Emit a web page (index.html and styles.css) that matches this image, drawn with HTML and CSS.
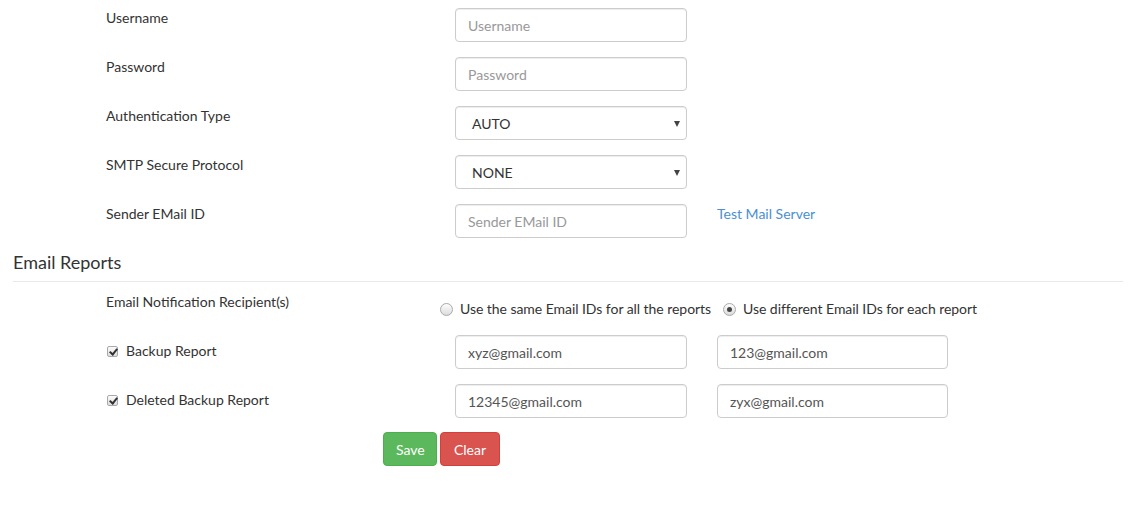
FILE: index.html
```html
<!DOCTYPE html>
<html>
<head>
<meta charset="utf-8">
<link rel="stylesheet" href="styles.css">
</head>
<body>
<div class="page">
  <div class="rows">
    <div class="row">
      <label class="lbl">Username</label>
      <input class="field" type="text" placeholder="Username">
    </div>
    <div class="row">
      <label class="lbl">Password</label>
      <input class="field" type="text" placeholder="Password">
    </div>
    <div class="row">
      <label class="lbl">Authentication Type</label>
      <div class="select"><span>AUTO</span><i class="arrow"></i></div>
    </div>
    <div class="row">
      <label class="lbl">SMTP Secure Protocol</label>
      <div class="select"><span>NONE</span><i class="arrow"></i></div>
    </div>
    <div class="row">
      <label class="lbl">Sender EMail ID</label>
      <input class="field" type="text" placeholder="Sender EMail ID">
      <a class="link" href="#">Test Mail Server</a>
    </div>
  </div>

  <h3 class="heading">Email Reports</h3>

  <div class="reports">
    <div class="row notif">
      <label class="lbl">Email Notification Recipient(s)</label>
      <div class="radios">
        <span class="radio-opt"><span class="radio"></span>Use the same Email IDs for all the reports</span>
        <span class="radio-opt"><span class="radio on"></span>Use different Email IDs for each report</span>
      </div>
    </div>
    <div class="row">
      <label class="lbl check-lbl"><span class="check"></span>Backup Report</label>
      <input class="field" type="text" value="xyz@gmail.com">
      <input class="field second" type="text" value="123@gmail.com">
    </div>
    <div class="row">
      <label class="lbl check-lbl"><span class="check"></span>Deleted Backup Report</label>
      <input class="field" type="text" value="12345@gmail.com">
      <input class="field second" type="text" value="zyx@gmail.com">
    </div>
    <div class="buttons">
      <button class="btn save">Save</button>
      <button class="btn clear">Clear</button>
    </div>
  </div>
</div>
</body>
</html>
```

FILE: styles.css
```css
* { box-sizing: border-box; }
html, body { margin: 0; padding: 0; background: #fff; }
body {
  font-family: Lato, "Open Sans", "Liberation Sans", sans-serif;
  font-size: 14px;
  line-height: 20px;
  color: #333;
}
.page { padding: 8px 23px 0 13px; }
.rows { display: flex; flex-direction: column; gap: 15px; }
.row { display: flex; align-items: flex-start; height: 34px; }
.lbl {
  width: 442px;
  padding-left: 93px;
  flex: none;
  font-weight: normal;
}
.field {
  width: 232px;
  height: 34px;
  flex: none;
  border: 1px solid #ccc;
  border-radius: 4px;
  padding: 6px 12px;
  font-family: inherit;
  font-size: 14px;
  color: #555;
  outline: none;
  box-shadow: inset 0 1px 1px rgba(0,0,0,0.075);
}
.field::placeholder { color: #999; }
.second { margin-left: 30px; width: 231px; }
.select {
  width: 232px;
  height: 34px;
  flex: none;
  border: 1px solid #ccc;
  border-radius: 4px;
  padding: 7px 0 0 16px;
  color: #333;
  display: flex;
  justify-content: space-between;
  box-shadow: inset 0 1px 1px rgba(0,0,0,0.075);
}
.arrow {
  width: 0; height: 0;
  border-left: 3px solid transparent;
  border-right: 3px solid transparent;
  border-top: 6px solid #444;
  margin: 7px 6px 0 0;
}
.link {
  margin-left: 30px;
  color: #4a90d2;
  text-decoration: none;
}
.heading {
  margin: 14px 0 0 0;
  padding: 0 0 9px 0;
  font-size: 18px;
  font-weight: normal;
  line-height: 20px;
  border-bottom: 1px solid #e9e9e9;
}
.reports { display: flex; flex-direction: column; }
.notif { height: auto; margin-top: 10px; }
.radios { display: flex; gap: 12px; margin-top: 7px; margin-left: -15px; letter-spacing: -0.05px; }
.radio-opt { display: flex; align-items: center; }
.radio {
  width: 13px; height: 13px;
  border-radius: 50%;
  border: 1px solid #a9a9a9;
  background: linear-gradient(#fdfdfd, #dcdcdc);
  margin-right: 7px;
  display: inline-flex;
  align-items: center;
  justify-content: center;
}
.radio.on::after {
  content: "";
  width: 5px; height: 5px;
  border-radius: 50%;
  background: #444;
}
.reports .row + .row { margin-top: 15px; }
.notif + .row { margin-top: 16px !important; }
.check-lbl { display: flex; align-items: center; padding-top: 6px; padding-left: 94px; }
.check {
  width: 11px; height: 11px;
  border: 1px solid #a9a9a9;
  border-radius: 2px;
  background: linear-gradient(#fbfbfb, #dedede);
  margin-right: 8px;
  position: relative;
}
.check::after {
  content: "";
  position: absolute;
  left: 3px; top: 0px;
  width: 3px; height: 6px;
  border-right: 2px solid #333;
  border-bottom: 2px solid #333;
  transform: rotate(40deg);
}
.buttons { display: flex; gap: 3px; margin-top: 14px; padding-left: 370px; }
.btn {
  height: 34px;
  padding: 6px 12px;
  border-radius: 4px;
  font-family: inherit;
  font-size: 14px;
  color: #fff;
  border: 1px solid;
}
.save { background: #5cb85c; border-color: #4cae4c; width: 54px; }
.clear { background: #d9534f; border-color: #d43f3a; width: 60px; }
```
